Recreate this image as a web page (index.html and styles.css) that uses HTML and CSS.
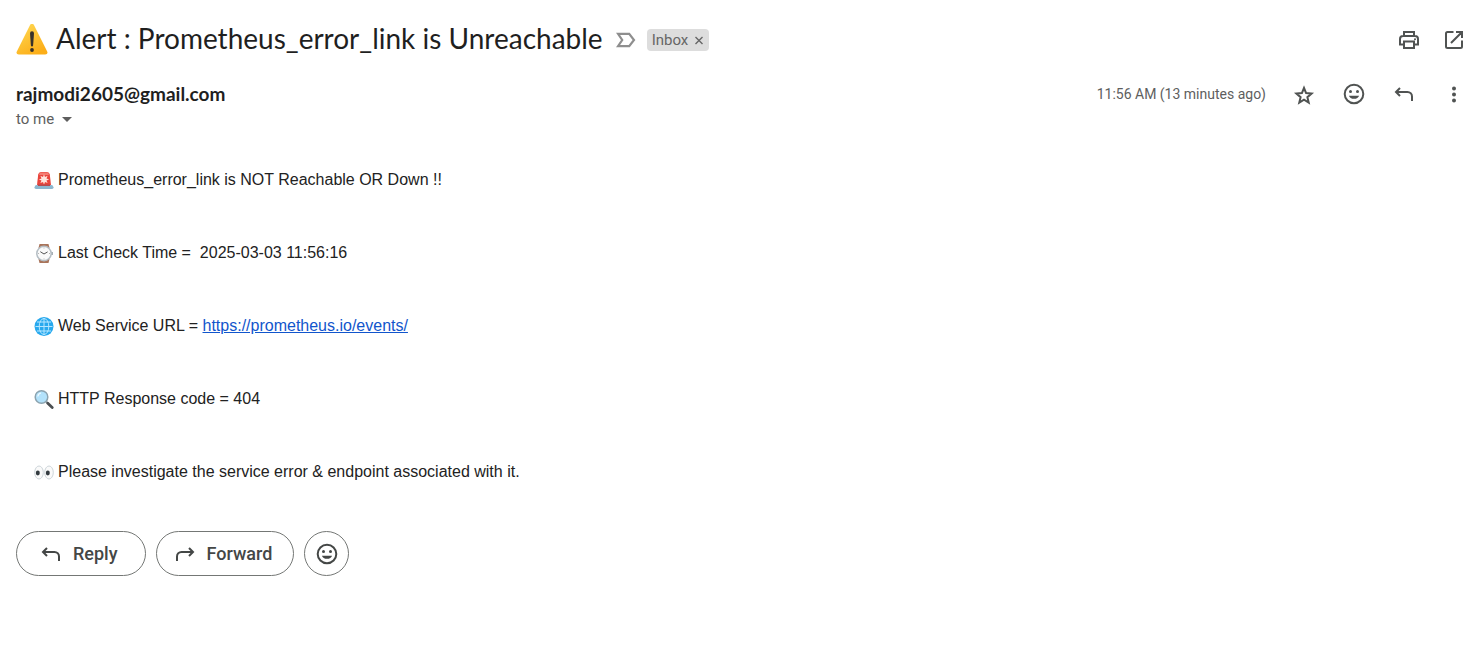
FILE: index.html
```
<!DOCTYPE html>
<html lang="en">
<head>
<meta charset="utf-8">
<meta name="viewport" content="width=device-width, initial-scale=1">
<title>Alert : Prometheus_error_link is Unreachable</title>
<link rel="stylesheet" href="styles.css">
</head>
<body>
<svg class="defs" aria-hidden="true">
  <defs>
    <symbol id="reply" viewBox="0 0 24 24"><path d="M8 6 4 10l4 4M4.200 10H15.500a4.500 4.500 0 0 1 4.500 4.500V19" fill="none" stroke="currentColor" stroke-width="2"/></symbol>
    <symbol id="smile" viewBox="0 0 24 24"><circle cx="12" cy="12" r="9.300" fill="none" stroke="currentColor" stroke-width="2"/><circle cx="8.500" cy="9.500" r="1.500" fill="currentColor"/><circle cx="15.500" cy="9.500" r="1.500" fill="currentColor"/><path d="M6.900 13.700h10.200a5.300 4.300 0 0 1-10.200 0z" fill="currentColor"/></symbol>
  </defs>
</svg>
<main class="mail">
  <header class="subject">
    <svg class="warning" viewBox="0 0 32 32" role="img" aria-label="Warning"><defs><linearGradient id="amber" x2=".6" y2="1"><stop stop-color="#ffdc58"/><stop offset="1" stop-color="#fcae18"/></linearGradient></defs><path d="M14.200.8q1.800-2.200 3.600 0L31.200 27.500q1.100 3-2 3.100H2.800q-3.100-.1-2-3.100z" fill="url(#amber)"/><path d="M14 9.400q0-2.200 2-2.200t2 2.200l-.9 12.200q-.2 1-1.100 1t-1.100-1z" fill="#37312a"/><circle cx="16" cy="26" r="1.900" fill="#37312a"/></svg>
    <h1 class="title">Alert : Prometheus_error_link is Unreachable</h1>
    <button class="icon-button important" type="button" aria-label="Mark as important"><svg viewBox="0 0 20 16"><path d="M2 1.800h11.200L18 8l-4.800 6.200H2L6.200 8z" fill="none" stroke="#8e8e8e" stroke-width="2.200"/></svg></button>
    <div class="chip"><span>Inbox</span><button class="chip-close" type="button" aria-label="Remove label Inbox"><svg viewBox="0 0 10 10"><path d="m1.500 2 7 7m0-7-7 7" stroke="currentColor" stroke-width="1.400"/></svg></button></div>
    <div class="tools">
      <button class="icon-button" type="button" aria-label="Print all"><svg viewBox="0 0 24 24" fill="none" stroke="currentColor" stroke-width="2"><path d="M7 7.500V4h10v3.500M6.500 16.500H3V11q0-3 3-3h12q3 0 3 3v5.500h-3.500M7 13.500h10V20H7z"/><circle cx="18" cy="11.300" r="1" fill="currentColor" stroke="none"/></svg></button>
      <button class="icon-button" type="button" aria-label="In new window"><svg viewBox="0 0 24 24" fill="none" stroke="currentColor" stroke-width="2"><path d="M11.500 4H5.500Q4 4 4 5.500v13Q4 20 5.500 20h13q1.500 0 1.500-1.500v-6M14 4h6v6M19.800 4.200 9 15"/></svg></button>
    </div>
  </header>

  <section class="meta">
    <div class="sender">
      <h2 class="address">rajmodi2605@gmail.com</h2>
      <button class="recipient" type="button"><span>to me</span><svg viewBox="0 0 10 5" aria-hidden="true"><path d="M0 0h10L5 5z" fill="currentColor"/></svg></button>
    </div>
    <time class="time" datetime="2025-03-03T11:56">11:56 AM (13 minutes ago)</time>
    <div class="actions">
      <button class="icon-button" type="button" aria-label="Star"><svg viewBox="0 0 24 24"><path d="m12 6 2.100 5.100 5.500.5-4.200 3.600 1.300 5.400-4.700-2.900-4.700 2.900 1.300-5.400-4.200-3.600 5.500-.5z" fill="none" stroke="currentColor" stroke-width="2"/></svg></button>
      <button class="icon-button" type="button" aria-label="Add reaction"><svg><use href="#smile"/></svg></button>
      <button class="icon-button" type="button" aria-label="Reply"><svg><use href="#reply"/></svg></button>
      <button class="icon-button" type="button" aria-label="More"><svg viewBox="0 0 24 24" fill="currentColor"><circle cx="12" cy="6.500" r="2"/><circle cx="12" cy="12.500" r="2"/><circle cx="12" cy="18.500" r="2"/></svg></button>
    </div>
  </section>

  <article class="body">
    <p class="line"><svg viewBox="0 0 20 20" role="img" aria-label="Siren"><path d="M3 15 4.200 4.500Q4.500 2 7 2h6q2.500 0 2.800 2.500L17 15z" fill="#e9443c"/><path d="M5 5Q5.200 2.600 7 2.600h6q1.800 0 2 2.400z" fill="#f47b70"/><path d="m10 4.300 1 2.600 2.600-1.100-1.100 2.600 2.600 1-2.600 1 1.100 2.600L11 12l-1 2.600L9 12l-2.600 1.100 1.100-2.700-2.600-1 2.600-1-1.100-2.600L9 6.900z" fill="#ffe5dd"/><path d="M2.500 15h15q1.500 0 2 2.200.2 1.800-1.500 1.800H2q-1.700 0-1.500-1.800Q1 15 2.500 15z" fill="#8db7cf"/><path d="M4 14.500h12V16H4z" fill="#b54a4d"/></svg><span>Prometheus_error_link is NOT Reachable OR Down !!</span></p>
    <p class="line"><svg viewBox="0 0 20 20" role="img" aria-label="Watch"><path d="M5.500 1h9L15.500 5h-11zM4.500 16h11l-1 4h-9z" fill="#a9745a"/><path d="M17 9h2v3h-2z" fill="#a7b0b5"/><circle cx="10" cy="10.500" r="7.200" fill="#fafafa" stroke="#b5bec4" stroke-width="1.500"/><path d="m6.300 8.700 3.700 2.300 3.600-2.100" fill="none" stroke="#555" stroke-width="1"/><path d="M10 4.500v1m0 10v1m-6-6h1m10 0h1" stroke="#999" stroke-width=".7"/></svg><span>Last Check Time =&nbsp; 2025-03-03 11:56:16</span></p>
    <p class="line"><svg viewBox="0 0 20 20" role="img" aria-label="Globe"><circle cx="10" cy="10.500" r="9.500" fill="#28a9ee"/><g fill="none" stroke="#b5e6ff" stroke-width="1"><ellipse cx="10" cy="10.500" rx="4.800" ry="8"/><path d="M10 2v17M1.500 10.500h17M3 6h14M3 15h14"/></g></svg><span>Web Service URL = <a href="https://prometheus.io/events/">https://prometheus.io/events/</a></span></p>
    <p class="line"><svg viewBox="0 0 20 20" role="img" aria-label="Magnifying glass"><path d="m12 12.500 2 2" stroke="#8b979d" stroke-width="2"/><path d="m13.800 14.300 4.400 4.200" stroke="#4b4f52" stroke-width="2.800" stroke-linecap="round"/><circle cx="7.500" cy="8" r="6.300" fill="#b3e2fb" stroke="#8ca3af" stroke-width="1.500"/><path d="M3.800 7.500q.5-3 3.200-3.500" fill="none" stroke="#effaff" stroke-width="1.200"/></svg><span>HTTP Response code = 404</span></p>
    <p class="line"><svg viewBox="0 0 20 20" role="img" aria-label="Eyes"><g fill="#fafafa" stroke="#c2cbd0" stroke-width=".8"><ellipse cx="5" cy="10.500" rx="4.300" ry="6.500"/><ellipse cx="15" cy="10.500" rx="4.300" ry="6.500"/></g><ellipse cx="3.800" cy="11" rx="2" ry="2.400" fill="#333b40"/><ellipse cx="13.800" cy="11" rx="2" ry="2.400" fill="#333b40"/></svg><span>Please investigate the service error &amp; endpoint associated with it.</span></p>
  </article>

  <footer class="responses">
    <button class="pill" type="button"><svg><use href="#reply"/></svg>Reply</button>
    <button class="pill forward" type="button"><svg><use href="#reply"/></svg>Forward</button>
    <button class="pill round" type="button" aria-label="Add reaction"><svg><use href="#smile"/></svg></button>
  </footer>
</main>
</body>
</html>
```

FILE: styles.css
```
* { box-sizing: border-box; }
body { margin: 0; background: #fff; color: #1f1f1f; font-family: Roboto, sans-serif; }
button { margin: 0; padding: 0; border: 0; background: none; color: inherit; font: inherit; cursor: pointer; }
svg { display: block; flex: none; }
h1, h2, p { margin: 0; font-weight: 400; }
.defs { position: absolute; width: 0; height: 0; }

.mail { padding: 16px 11px 16px 16px; }

.subject { display: flex; align-items: center; min-height: 47px; }
.warning { width: 32px; height: 32px; margin-right: 8px; }
.title { padding-bottom: 4px; font-family: Lato, sans-serif; font-size: 28px; line-height: 36px; }
.icon-button svg { width: 24px; height: 24px; }
.icon-button { color: #505352; }
.important { margin: 0 11px 0 13px; }
.important svg { width: 20px; height: 16px; }
.chip { display: flex; align-items: center; gap: 6px; height: 22px; padding: 0 5px; border-radius: 4px; background: #ddd; color: #666; font-size: 15px; line-height: 20px; }
.chip-close svg { width: 10px; height: 10px; }
.tools { display: flex; gap: 21px; margin-left: auto; }

.meta { display: flex; align-items: flex-start; padding-top: 19px; color: #5e5e5e; font-size: 15px; line-height: 24px; }
.sender { flex: 1; }
.address { color: #1f1f1f; font-family: Lato, sans-serif; font-size: 19px; font-weight: 700; line-height: 23px; }
.recipient { display: flex; align-items: center; gap: 8px; line-height: 28px; }
.recipient svg { width: 10px; height: 5px; }
.time { font-size: 14px; }
.actions { display: flex; gap: 26px; margin-left: 26px; }

.body { display: flex; flex-direction: column; gap: 49px; padding: 35px 18px 0; color: #222; font-family: "Liberation Sans", Arial, sans-serif; font-size: 16px; line-height: 24px; }
.line { display: flex; align-items: center; gap: 4px; }
.line svg { width: 20px; height: 20px; }
.line a { color: #15c; }

.responses { display: flex; gap: 10px; padding-top: 47px; }
.pill { display: flex; align-items: center; gap: 10px; height: 45px; padding: 0 27px 0 22px; border: 1px solid #747775; border-radius: 23px; color: #444746; font-size: 18px; font-weight: 500; }
.pill svg { width: 24px; height: 24px; }
.forward { padding: 0 21px 0 16px; }
.forward svg { transform: scaleX(-1); }
.round { justify-content: center; width: 45px; padding: 0; }
```
